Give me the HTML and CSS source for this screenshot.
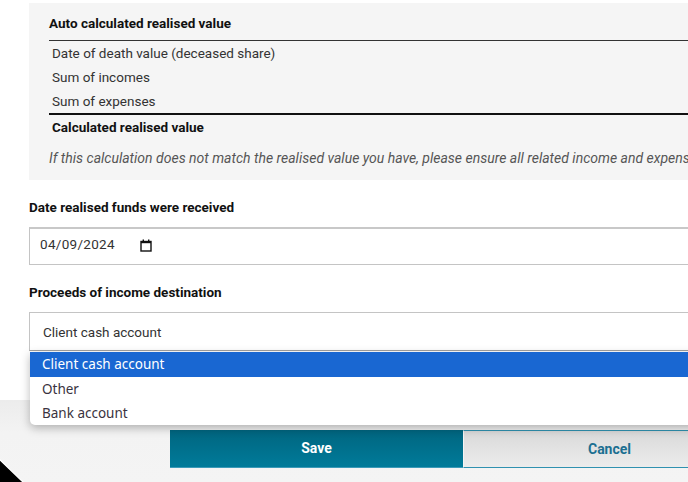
FILE: index.html
```html
<!DOCTYPE html>
<html lang="en">
<head>
<meta charset="utf-8">
<title>Realised value</title>
<link rel="stylesheet" href="styles.css">
</head>
<body>
<div class="page">
  <section class="calc-box">
    <h3 class="calc-title">Auto calculated realised value</h3>
    <div class="calc-rows">
      <div class="calc-row">Date of death value (deceased share)</div>
      <div class="calc-row">Sum of incomes</div>
      <div class="calc-row">Sum of expenses</div>
      <div class="calc-row calc-total">Calculated realised value</div>
    </div>
    <p class="calc-note">If this calculation does not match the realised value you have, please ensure all related income and expenses have been recorded.</p>
  </section>

  <div class="field">
    <label class="field-label">Date realised funds were received</label>
    <div class="input date-input">
      <span class="date-value">04/09/2024</span>
      <svg class="cal-icon" width="12" height="13" viewBox="0 0 12 13">
        <rect x="1" y="2.5" width="10" height="9.5" fill="none" stroke="#111" stroke-width="1.4"/>
        <rect x="1" y="2" width="10" height="2.2" fill="#111"/>
        <rect x="2.6" y="0.5" width="1.4" height="2" fill="#111"/>
        <rect x="8" y="0.5" width="1.4" height="2" fill="#111"/>
      </svg>
    </div>
  </div>

  <div class="field">
    <label class="field-label">Proceeds of income destination</label>
    <div class="input select-input">Client cash account</div>
  </div>
</div>

<footer class="footer">
  <button class="btn btn-save">Save</button>
  <button class="btn btn-cancel">Cancel</button>
</footer>

<ul class="dropdown">
  <li class="opt opt-selected">Client cash account</li>
  <li class="opt">Other</li>
  <li class="opt">Bank account</li>
</ul>

<svg class="cursor" width="24" height="26" viewBox="0 0 24 26">
  <polygon points="-2,1 25,27 -2,27" fill="#000" stroke="#fff" stroke-width="1.2"/>
</svg>
</body>
</html>
```

FILE: styles.css
```css
html, body {
  margin: 0;
  padding: 0;
}
body {
  width: 688px;
  height: 482px;
  overflow: hidden;
  position: relative;
  background: #fff;
  font-family: Roboto, "Liberation Sans", Arial, sans-serif;
  font-size: 13.5px;
  color: #1a1a1a;
}
.page {
  padding-left: 29px;
  width: 760px;
}
.calc-box {
  margin-top: 3px;
  background: #f5f5f5;
  padding: 11px 0 13px 20px;
}
.calc-title {
  margin: 0 0 8px;
  font-size: 13.5px;
  font-weight: 700;
  line-height: 18px;
  color: #111;
}
.calc-rows {
  border-top: 1px solid #333;
}
.calc-row {
  line-height: 24px;
  padding-left: 3px;
  color: #333;
}
.calc-total {
  border-top: 2px solid #111;
  font-weight: 700;
  color: #111;
}
.calc-note {
  margin: 10px 0 0;
  line-height: 18px;
  font-size: 14px;
  font-style: italic;
  color: #555;
  white-space: nowrap;
}
.field {
  margin-top: 18px;
}
.field-label {
  display: block;
  font-weight: 700;
  line-height: 18px;
  color: #111;
  margin-bottom: 11px;
}
.input {
  box-sizing: border-box;
  border: 1px solid #c4c4c4;
  display: flex;
  align-items: center;
  color: #333;
}
.date-input {
  height: 38px;
  padding-left: 10px;
  padding-bottom: 5px;
  border-top: 2px solid #c8c8c8;
}
.date-value {
  letter-spacing: 0.3px;
}
.cal-icon {
  margin-left: 25px;
  margin-top: 3px;
}
.select-input {
  height: 39px;
  padding-left: 13px;
  margin-top: 1px;
  border-bottom-color: #a0a0a0;
}
.footer {
  position: absolute;
  left: 0;
  right: 0;
  top: 400px;
  bottom: 0;
  background: linear-gradient(#ececec, #f3f3f3 40%, #f4f4f4);
  display: flex;
  padding: 30px 0 0 170px;
  box-sizing: border-box;
}
.btn {
  width: 293px;
  height: 38px;
  flex: none;
  padding-bottom: 2px;
  font-family: Roboto, "Liberation Sans", Arial, sans-serif;
  font-size: 14px;
  font-weight: 700;
  cursor: pointer;
}
.btn-save {
  border: none;
  border-bottom: 1px solid #3b9ab8;
  background: linear-gradient(#00657f, #007b9a);
  color: #fff;
}
.btn-cancel {
  border: 1px solid #2f91b0;
  border-left: 1px solid #f4f4f4;
  background: linear-gradient(#d9d9d9, #ececec);
  color: #1b6f91;
}
.dropdown {
  position: absolute;
  left: 30px;
  top: 352px;
  width: 700px;
  margin: 0;
  padding: 0;
  list-style: none;
  background: #fff;
  border-radius: 0 0 5px 5px;
  box-shadow: 0 3px 10px rgba(0, 0, 0, 0.28);
  font-family: "Noto Sans", "Liberation Sans", sans-serif;
  font-size: 13.5px;
}
.opt {
  height: 24px;
  line-height: 24px;
  padding-left: 12px;
  color: #3a3340;
}
.opt-selected {
  background: #1967d2;
  color: #fff;
  height: 25px;
}
.cursor {
  position: absolute;
  left: 0;
  top: 457px;
}
```
